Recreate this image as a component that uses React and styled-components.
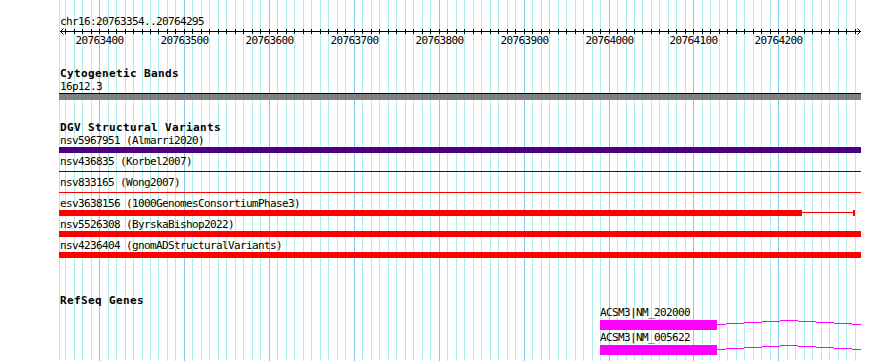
import React from 'react';
import styled, { createGlobalStyle } from 'styled-components';

const START = 20763354;
const END = 20764295;
const PX0 = 60;
const SCALE = 0.8491;
const TRACK_LEFT = 59;
const TRACK_RIGHT = 861;
const TRACK_W = TRACK_RIGHT - TRACK_LEFT;

const px = (bp) => Math.round(PX0 + (bp - START) * SCALE);
const clampX = (x) => Math.max(TRACK_LEFT, Math.min(TRACK_RIGHT, x));

const Global = createGlobalStyle`
  html, body { margin: 0; padding: 0; background: #ffffff; }
  body { font-family: "DejaVu Sans Mono", "Liberation Mono", monospace; }
`;

const Frame = styled.div`
  position: relative;
  width: 890px;
  height: 361px;
  overflow: hidden;
  background: #ffffff;
`;

const GridLayer = styled.svg`
  position: absolute;
  left: 0;
  top: 0;
  pointer-events: none;
`;

const Panel = styled.div`
  position: relative;
  width: ${TRACK_W}px;
  padding: 15px 0 0 ${TRACK_LEFT}px;
`;

const SmallText = styled.div`
  font-family: "DejaVu Sans Mono", "Liberation Mono", monospace;
  font-size: 11px;
  letter-spacing: -0.62px;
  line-height: 13px;
  height: 13px;
  color: #000;
  white-space: pre;
  padding-left: 1px;
`;

const GeneLabel = styled(SmallText)`
  line-height: 12px;
  padding-left: 0;
  position: relative;
  z-index: 1;
`;

const RulerAxis = styled.svg`
  display: block;
  overflow: visible;
`;

const Track = styled.section`
  margin-top: ${(p) => p.$top}px;
`;

const TrackTitle = styled.h2`
  margin: 0;
  padding-left: 1px;
  font-family: "DejaVu Sans Mono", "Liberation Mono", monospace;
  font-weight: bold;
  font-size: 11px;
  letter-spacing: 0.38px;
  line-height: 12px;
  height: 12px;
  color: #000;
  white-space: pre;
`;

const Band = styled.div`
  box-sizing: border-box;
  height: 7px;
  width: ${TRACK_W}px;
  border-top: 1px solid #000;
  background: #808080;
`;

const VariantRow = styled.div`
  height: 21px;
`;

const Lane = styled.div`
  display: flex;
  align-items: flex-start;
  height: 6px;
`;

const SolidBar = styled.div`
  flex: none;
  height: 6px;
  background: ${(p) => p.$color};
`;

const ThinLine = styled.div`
  flex: none;
  height: 1px;
  margin-top: ${(p) => p.$offset}px;
  background: ${(p) => p.$color};
`;

const EndCap = styled.div`
  flex: none;
  width: 2px;
  height: 6px;
  background: ${(p) => p.$color};
`;

const GeneRow = styled.div`
  height: 25px;
`;

const GeneGlyph = styled.svg`
  display: block;
`;

const gridLines = [];
gridLines.push({ x: TRACK_LEFT, major: false });
for (let bp = 20763360; bp <= END; bp += 10) {
  gridLines.push({ x: px(bp), major: bp % 100 === 0 });
}

const ticks = [];
for (let bp = 20763360; bp <= END; bp += 10) ticks.push(px(bp));
const labels = [];
for (let bp = 20763400; bp <= END; bp += 100) labels.push({ bp, x: px(bp) });

const variants = [
  { label: 'nsv5967951 (Almarri2020)', color: '#4b0082', kind: 'bar', start: 20763000, end: 20765000 },
  { label: 'nsv436835 (Korbel2007)', color: '#0000ff', kind: 'line', start: 20763000, end: 20765000 },
  { label: 'nsv833165 (Wong2007)', color: '#ff0000', kind: 'line', start: 20763000, end: 20765000 },
  { label: 'esv3638156 (1000GenomesConsortiumPhase3)', color: '#ff0000', kind: 'split', start: 20763000, end: 20764228, tailEnd: 20764288 },
  { label: 'nsv5526308 (ByrskaBishop2022)', color: '#ff0000', kind: 'bar', start: 20763000, end: 20765000 },
  { label: 'nsv4236404 (gnomADStructuralVariants)', color: '#ff0000', kind: 'bar', start: 20763000, end: 20765000 },
];

const genes = [
  { label: 'ACSM3|NM_202000', exonStart: 20763990, exonEnd: 20764128 },
  { label: 'ACSM3|NM_005622', exonStart: 20763990, exonEnd: 20764128 },
];

function Variant({ v }) {
  const x0 = clampX(px(v.start));
  const x1 = clampX(px(v.end));
  let lane;
  if (v.kind === 'line') {
    lane = (
      <Lane>
        <ThinLine $color={v.color} $offset={3} style={{ width: x1 - x0 }} />
      </Lane>
    );
  } else if (v.kind === 'split') {
    const x2 = clampX(px(v.tailEnd));
    lane = (
      <Lane>
        <SolidBar $color={v.color} style={{ width: x1 - x0 }} />
        <ThinLine $color={v.color} $offset={2} style={{ width: x2 - x1 }} />
        <EndCap $color={v.color} />
      </Lane>
    );
  } else {
    lane = (
      <Lane>
        <SolidBar $color={v.color} style={{ width: x1 - x0 }} />
      </Lane>
    );
  }
  return (
    <VariantRow>
      <SmallText>{v.label}</SmallText>
      {lane}
    </VariantRow>
  );
}

function Gene({ g }) {
  const ex0 = px(g.exonStart) - TRACK_LEFT;
  const ex1 = px(g.exonEnd) - TRACK_LEFT;
  const end = TRACK_RIGHT - TRACK_LEFT;
  const peak = Math.round((ex1 + end) / 2);
  return (
    <GeneRow>
      <GeneLabel style={{ marginLeft: ex0 }}>{g.label}</GeneLabel>
      <GeneGlyph width={TRACK_W} height={10} viewBox={`0 0 ${TRACK_W} 10`}>
        <rect x={ex0} y={0} width={ex1 - ex0} height={10} fill="#ff00ff" />
        <polyline
          points={`${ex1},4.5 ${peak},0.5 ${end},4.5`}
          fill="none"
          stroke="#ff00ff"
          strokeWidth="1"
          shapeRendering="crispEdges"
        />
      </GeneGlyph>
    </GeneRow>
  );
}

export default function App() {
  return (
    <>
      <Global />
      <Frame>
        <GridLayer width="890" height="361" shapeRendering="crispEdges">
          {gridLines.map((l, i) => (
            <rect key={i} x={l.x} y={0} width={1} height={361} fill={l.major ? '#87cbea' : '#afeeee'} />
          ))}
        </GridLayer>
        <Panel>
          <SmallText>chr16:20763354..20764295</SmallText>
          <RulerAxis width={TRACK_W + 2} height={20}>
            <g shapeRendering="crispEdges">
              <rect x={1} y={3} width={TRACK_RIGHT - TRACK_LEFT - 1} height={1} fill="#000" />
              {ticks.map((x, i) => (
                <rect key={i} x={x - TRACK_LEFT} y={1} width={1} height={5} fill="#000" />
              ))}
            </g>
            <polyline points="4.5,0.5 1.5,3.5 4.5,6.5" fill="none" stroke="#000" strokeWidth="1" />
            <polyline
              points={`${TRACK_W - 3.5},0.5 ${TRACK_W - 0.5},3.5 ${TRACK_W - 3.5},6.5`}
              fill="none"
              stroke="#000"
              strokeWidth="1"
            />
            {labels.map((l) => (
              <text
                key={l.bp}
                x={l.x - TRACK_LEFT + 0.5}
                y={16}
                textAnchor="middle"
                fontFamily='"DejaVu Sans Mono", "Liberation Mono", monospace'
                fontSize="11"
                letterSpacing="-0.62"
                fill="#000"
              >
                {l.bp}
              </text>
            ))}
          </RulerAxis>

          <Track $top={20}>
            <TrackTitle>Cytogenetic Bands</TrackTitle>
            <SmallText>16p12.3</SmallText>
            <Band />
          </Track>

          <Track $top={22}>
            <TrackTitle>DGV Structural Variants</TrackTitle>
            {variants.map((v) => (
              <Variant key={v.label} v={v} />
            ))}
          </Track>

          <Track $top={35}>
            <TrackTitle>RefSeq Genes</TrackTitle>
            {genes.map((g) => (
              <Gene key={g.label} g={g} />
            ))}
          </Track>
        </Panel>
      </Frame>
    </>
  );
}
